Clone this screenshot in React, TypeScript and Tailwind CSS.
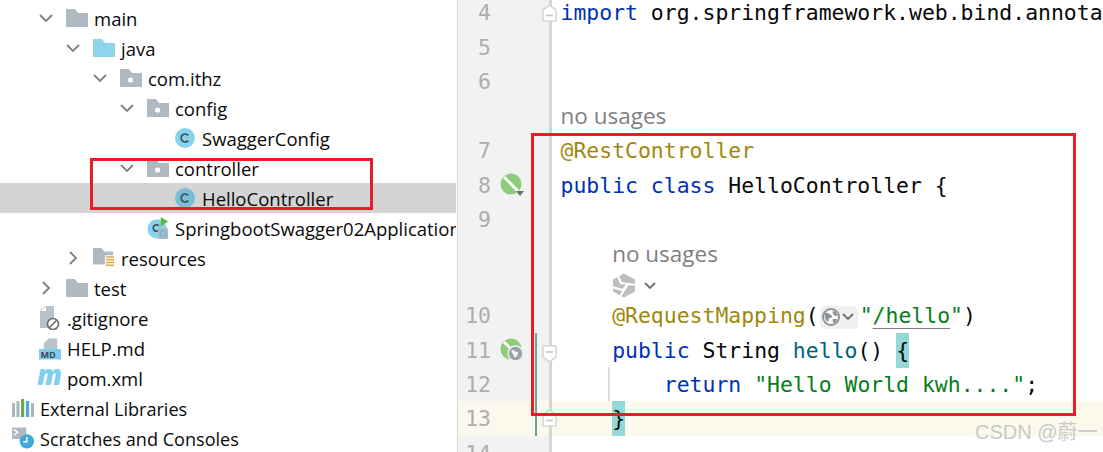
import React from "react";

const Chevron = ({ open }: { open: boolean }) => (
  <svg width="16" height="16" viewBox="0 0 16 16" fill="none" stroke="#7f7f7f" strokeWidth="1.8">
    {open ? <path d="M2 5l6 6 6-6" /> : <path d="M5 2l6 6-6 6" />}
  </svg>
);

const Folder = ({ color = "#afb9c1", dot = false }: { color?: string; dot?: boolean }) => (
  <svg width="22" height="18" viewBox="0 0 22 18">
    <path d="M0 0h9l3 4h10v14H0z" fill={color} />
    {dot && <circle cx="10.5" cy="11" r="2.6" fill="#fff" />}
  </svg>
);

const ResFolder = () => (
  <svg width="24" height="22" viewBox="0 0 24 22">
    <path d="M0 0h9l3 4h10v14H0z" fill="#afb9c1" />
    <rect x="13" y="8" width="11" height="14" fill="#fff" />
    <path d="M14 10h9M14 13h9M14 16h9M14 19h9" stroke="#e5a443" strokeWidth="1.6" />
  </svg>
);

const ClassIcon = ({ fill = "#89d2ec" }: { fill?: string }) => (
  <svg width="20" height="20" viewBox="0 0 20 20">
    <circle cx="10" cy="10" r="10" fill={fill} />
    <path d="M13.2 7.4a4 4 0 1 0 0 5.2" fill="none" stroke="#3f4a52" strokeWidth="1.7" />
  </svg>
);

const AppIcon = () => (
  <svg width="24" height="24" viewBox="0 0 24 24">
    <circle cx="11" cy="13" r="10.5" fill="#89d2ec" />
    <path d="M13 9.5a3.6 3.6 0 1 0 0 5" fill="none" stroke="#3f4a52" strokeWidth="1.7" />
    <path d="M15 0l8 5-8 5z" fill="#5fb83f" />
    <rect x="12" y="12" width="11" height="12" rx="1.5" fill="#afb9c1" />
    <circle cx="17.5" cy="18" r="3.2" fill="none" stroke="#6fbcd8" strokeWidth="1.5" />
  </svg>
);

const GitIgnore = () => (
  <svg width="20" height="24" viewBox="0 0 20 24">
    <path d="M0 5l5-5h9v22H0z" fill="#b9c2c9" />
    <path d="M1 5h5V0z" fill="#fff" />
    <circle cx="13" cy="18" r="5.5" fill="#fff" stroke="#6d6d6d" strokeWidth="1.6" />
    <path d="M9.5 21.5l7-7" stroke="#6d6d6d" strokeWidth="1.6" />
  </svg>
);

const MdIcon = () => (
  <svg width="23" height="23" viewBox="0 0 23 23">
    <path d="M5 6l5-5h9v12H5z" fill="#b9c2c9" />
    <rect x="0" y="12" width="23" height="11" fill="#7fcdec" />
    <text x="1.5" y="21.5" fontSize="9.5" fontWeight="700" fill="#3d4a55" fontFamily="'Open Sans', sans-serif">MD</text>
  </svg>
);

const PomIcon = () => (
  <svg width="24" height="20" viewBox="0 0 24 20" className="shrink-0">
    <text x="-1" y="17" fontSize="29" fontWeight="800" fontStyle="italic" textLength="25" lengthAdjust="spacingAndGlyphs" fill="#7fd0ee" fontFamily="'Open Sans', sans-serif">m</text>
  </svg>
);

const LibIcon = () => (
  <svg width="22" height="18" viewBox="0 0 22 18">
    <rect x="0" y="4" width="3" height="14" fill="#a9b4bc" />
    <rect x="4.5" y="2" width="3" height="16" fill="#a9b4bc" />
    <rect x="9" y="0" width="3.2" height="18" fill="#6aa84f" />
    <rect x="14" y="2" width="3.2" height="16" fill="#4fa8d8" />
    <rect x="19" y="4" width="3" height="14" fill="#a9b4bc" />
  </svg>
);

const ScratchIcon = () => (
  <svg width="23" height="22" viewBox="0 0 23 22">
    <rect x="0" y="0" width="15" height="12" fill="#afb9c1" />
    <path d="M2 2l4 3-4 3" fill="none" stroke="#fff" strokeWidth="1.4" />
    <circle cx="15.5" cy="14.5" r="7.5" fill="#3fa9d8" />
    <path d="M15.5 10v5h-3.5" fill="none" stroke="#fff" strokeWidth="1.5" />
  </svg>
);

type Row = { d: number; label: string; open?: boolean; icon: React.ReactNode; selected?: boolean };

const rows: Row[] = [
  { d: 0, label: "main", open: true, icon: <Folder /> },
  { d: 1, label: "java", open: true, icon: <Folder color="#8fd3ec" /> },
  { d: 2, label: "com.ithz", open: true, icon: <Folder dot /> },
  { d: 3, label: "config", open: true, icon: <Folder dot /> },
  { d: 4, label: "SwaggerConfig", icon: <ClassIcon /> },
  { d: 3, label: "controller", open: true, icon: <Folder dot /> },
  { d: 4, label: "HelloController", icon: <ClassIcon fill="#79bdd5" />, selected: true },
  { d: 3, label: "SpringbootSwagger02Application", icon: <AppIcon /> },
  { d: 1, label: "resources", open: false, icon: <ResFolder /> },
  { d: 0, label: "test", open: false, icon: <Folder /> },
  { d: -1, label: ".gitignore", icon: <GitIgnore /> },
  { d: -1, label: "HELP.md", icon: <MdIcon /> },
  { d: -1, label: "pom.xml", icon: <PomIcon /> },
  { d: -2, label: "External Libraries", icon: <LibIcon /> },
  { d: -2, label: "Scratches and Consoles", icon: <ScratchIcon /> },
];

const TreeRow = ({ d, label, open, icon, selected }: Row) => (
  <div
    className={`flex h-[30px] items-center whitespace-nowrap ${selected ? "bg-[#d4d4d4]" : ""}`}
    style={{ paddingLeft: 12 + 27 * (d + 2) }}
  >
    {open !== undefined && (
      <span className="-ml-[28px] mr-[12px] flex w-4 items-center">
        <Chevron open={open} />
      </span>
    )}
    <span className="flex w-[22px] shrink-0 items-center justify-center">{icon}</span>
    <span className={`ml-[6px] pt-[2px] leading-[26px] text-[#0a0a0a] ${d === -2 ? "text-[18.1px]" : "text-[18.5px]"}`}>
      {label}
    </span>
  </div>
);

const RunIcon = () => (
  <svg width="24" height="24" viewBox="0 0 24 24">
    <circle cx="11" cy="11" r="10.5" fill="#8fcb7c" />
    <path d="M4 4l14 14" stroke="#fff" strokeWidth="3" />
    <path d="M16 18h8l-4 5z" fill="#6e6e6e" />
  </svg>
);

const WebIcon = () => (
  <svg width="24" height="24" viewBox="0 0 24 24">
    <circle cx="11" cy="11" r="10.5" fill="#8fcb7c" />
    <path d="M4 4l14 14" stroke="#fff" strokeWidth="3" />
    <circle cx="15.5" cy="15.5" r="7.5" fill="#9aa3aa" stroke="#f2f2f2" strokeWidth="1.5" />
    <path d="M12 12c3 0 3 2 5 2s1 3-1 5-2-2-3-3-2-3-1-4z" fill="#f2f2f2" />
  </svg>
);

const Globe = ({ size = 18 }: { size?: number }) => (
  <svg width={size} height={size} viewBox="0 0 18 18">
    <circle cx="9" cy="9" r="8" fill="#fff" stroke="#8d9499" strokeWidth="2" />
    <path d="M3 5c3-1 4 1 6 2s1 3-1 3-1 3-2 4c-2-1-4-4-3-9zM11 3c2 0 4 2 4 4s-2 1-3 0-2-3-1-4zM11 11h4c0 2-2 4-3 4s-2-3-1-4z" fill="#8d9499" />
  </svg>
);

const SmallChevron = () => (
  <svg width="12" height="8" viewBox="0 0 12 8" fill="none" stroke="#6e6e6e" strokeWidth="1.8">
    <path d="M1 1l5 5 5-5" />
  </svg>
);

const PinWheel = () => (
  <svg width="24" height="25" viewBox="0 0 24 25">
    <path d="M12 .5L23 6.500V18.500L12 24.500 1 18.500V6.500z" fill="#bdbdbd" />
    <path d="M5 1l4 9 15 2M9 10l7 1-9 14M16 11l-5 6-11-3" fill="none" stroke="#fff" strokeWidth="2.2" />
  </svg>
);

type FoldKind = "open" | "close" | undefined;

const Fold = ({ kind, top }: { kind: "open" | "close"; top: number }) => (
  <svg
    className="absolute -left-[7.5px]"
    style={{ top }}
    width="15"
    height="18"
    viewBox="0 0 15 18"
    fill="#fff"
    stroke="#d6d6d6"
    strokeWidth="1.6"
  >
    {kind === "open" ? <path d="M1 1h13v11l-6.500 5L1 12z" /> : <path d="M1 17h13V6L7.500 1 1 6z" />}
    <path d={kind === "open" ? "M4 7h7" : "M4 11.500h7"} stroke="#c4c4c4" strokeWidth="1.6" />
  </svg>
);

const Line = ({
  num,
  icon,
  fold,
  foldTop = 7,
  bar,
  guide,
  active,
  height = "h-[34.5px]",
  children,
}: {
  num?: number;
  icon?: React.ReactNode;
  fold?: FoldKind;
  foldTop?: number;
  bar?: boolean;
  guide?: boolean;
  active?: boolean;
  height?: string;
  children?: React.ReactNode;
}) => (
  <div className={`flex ${height} ${active ? "bg-[#fbf9ec]" : ""}`}>
    <div className={`flex w-[91px] shrink-0 items-stretch ${active ? "" : "bg-[#f2f2f2]"}`}>
      <span className="flex w-[33px] items-center justify-end pt-[2px] text-[#adadad]">{num}</span>
      <span className="ml-[9px] flex w-[24px] items-center">{icon}</span>
      <span className={`ml-[11px] w-[1.5px] ${bar ? "bg-[#6f9f9a]" : ""}`} />
    </div>
    <div className="relative w-[3px] shrink-0 bg-[#d6d6d6]">{fold && <Fold kind={fold} top={foldTop} />}</div>
    <div className="relative flex min-w-0 flex-1 items-center pl-[8.5px] pt-[2px]">
      {guide && <span className="absolute bottom-0 left-[56px] top-0 w-[1.5px] bg-[#dedede]" />}
      <span className="relative whitespace-pre">{children}</span>
    </div>
  </div>
);

const Kw = ({ children }: { children: React.ReactNode }) => <span className="text-[#0033b3]">{children}</span>;
const Ann = ({ children }: { children: React.ReactNode }) => <span className="text-[#9e880d]">{children}</span>;
const Str = ({ children }: { children: React.ReactNode }) => <span className="text-[#067d17]">{children}</span>;
const Hint = ({ children }: { children: React.ReactNode }) => (
  <span className="font-['Open_Sans',sans-serif] text-[22.5px] text-[#7f7f7f]">{children}</span>
);
const Brace = ({ children }: { children: React.ReactNode }) => (
  <span className="bg-[#93d9d9] pb-[5px] pt-[5px]">{children}</span>
);

export default function App() {
  return (
    <div className="relative flex h-[452px] w-[1103px] overflow-hidden bg-white">
      <aside className="w-[456px] shrink-0 overflow-hidden pt-[3px] font-['Open_Sans',sans-serif]">
        {rows.map((r) => (
          <TreeRow key={r.label} {...r} />
        ))}
      </aside>
      <main className="ml-[1px] min-w-0 flex-1 overflow-hidden border-l border-[#d4d4d4] font-['DejaVu_Sans_Mono',monospace] text-[21.45px] text-[#080808]">
        <div className="-mt-[5px]">
          <Line num={4} fold="close" foldTop={9}>
            <Kw>import</Kw> org.springframework.web.bind.annota
          </Line>
          <Line num={5} />
          <Line num={6} />
          <Line height="h-[34.5px]">
            <span className="relative -top-[1px]">
              <Hint>no usages</Hint>
            </span>
          </Line>
          <Line num={7}>
            <Ann>@RestController</Ann>
          </Line>
          <Line num={8} icon={<RunIcon />}>
            <Kw>public class</Kw> HelloController {"{"}
          </Line>
          <Line num={9} />
          <Line height="h-[33.5px]">
            {"    "}
            <Hint>no usages</Hint>
          </Line>
          <Line height="h-[28px]">
            {"    "}
            <span className="inline-flex items-center gap-[8px] align-middle">
              <PinWheel />
              <SmallChevron />
            </span>
          </Line>
          <Line num={10}>
            {"    "}
            <Ann>@RequestMapping</Ann>(
            <span className="mx-[1.500px] inline-flex h-[23px] w-[38px] items-center gap-[2px] rounded-[5px] bg-[#f0f0f0] pl-[2px] align-middle">
              <Globe />
              <SmallChevron />
            </span>
            <Str>"</Str>
            <span className="text-[#067d17] underline decoration-[#7f7f7f] decoration-1 underline-offset-[5px]">/hello</span>
            <Str>"</Str>)
          </Line>
          <Line num={11} icon={<WebIcon />} bar fold="open" foldTop={12}>
            {"    "}
            <Kw>public</Kw> String <span className="text-[#00627a]">hello</span>() <Brace>{"{"}</Brace>
          </Line>
          <Line num={12} bar guide height="h-[34px]">
            {"        "}
            <Kw>return</Kw> <Str>"Hello World kwh...."</Str>;
          </Line>
          <Line num={13} bar active fold="close" foldTop={8}>
            {"    "}
            <Brace>{"}"}</Brace>
          </Line>
          <Line num={14} />
        </div>
      </main>

      <div className="absolute left-[90px] top-[158px] h-[52px] w-[283px] border-[3px] border-[#ed1c24]" />
      <div className="absolute left-[531px] top-[133px] h-[283px] w-[545px] border-[3px] border-[#ed1c24]" />
      <div className="absolute left-[975px] top-[420px] font-['Liberation_Sans','Noto_Sans_CJK_SC',sans-serif] text-[20px] leading-[24px] text-[#c9c9c9]">
        CSDN @蔚一
      </div>
    </div>
  );
}
